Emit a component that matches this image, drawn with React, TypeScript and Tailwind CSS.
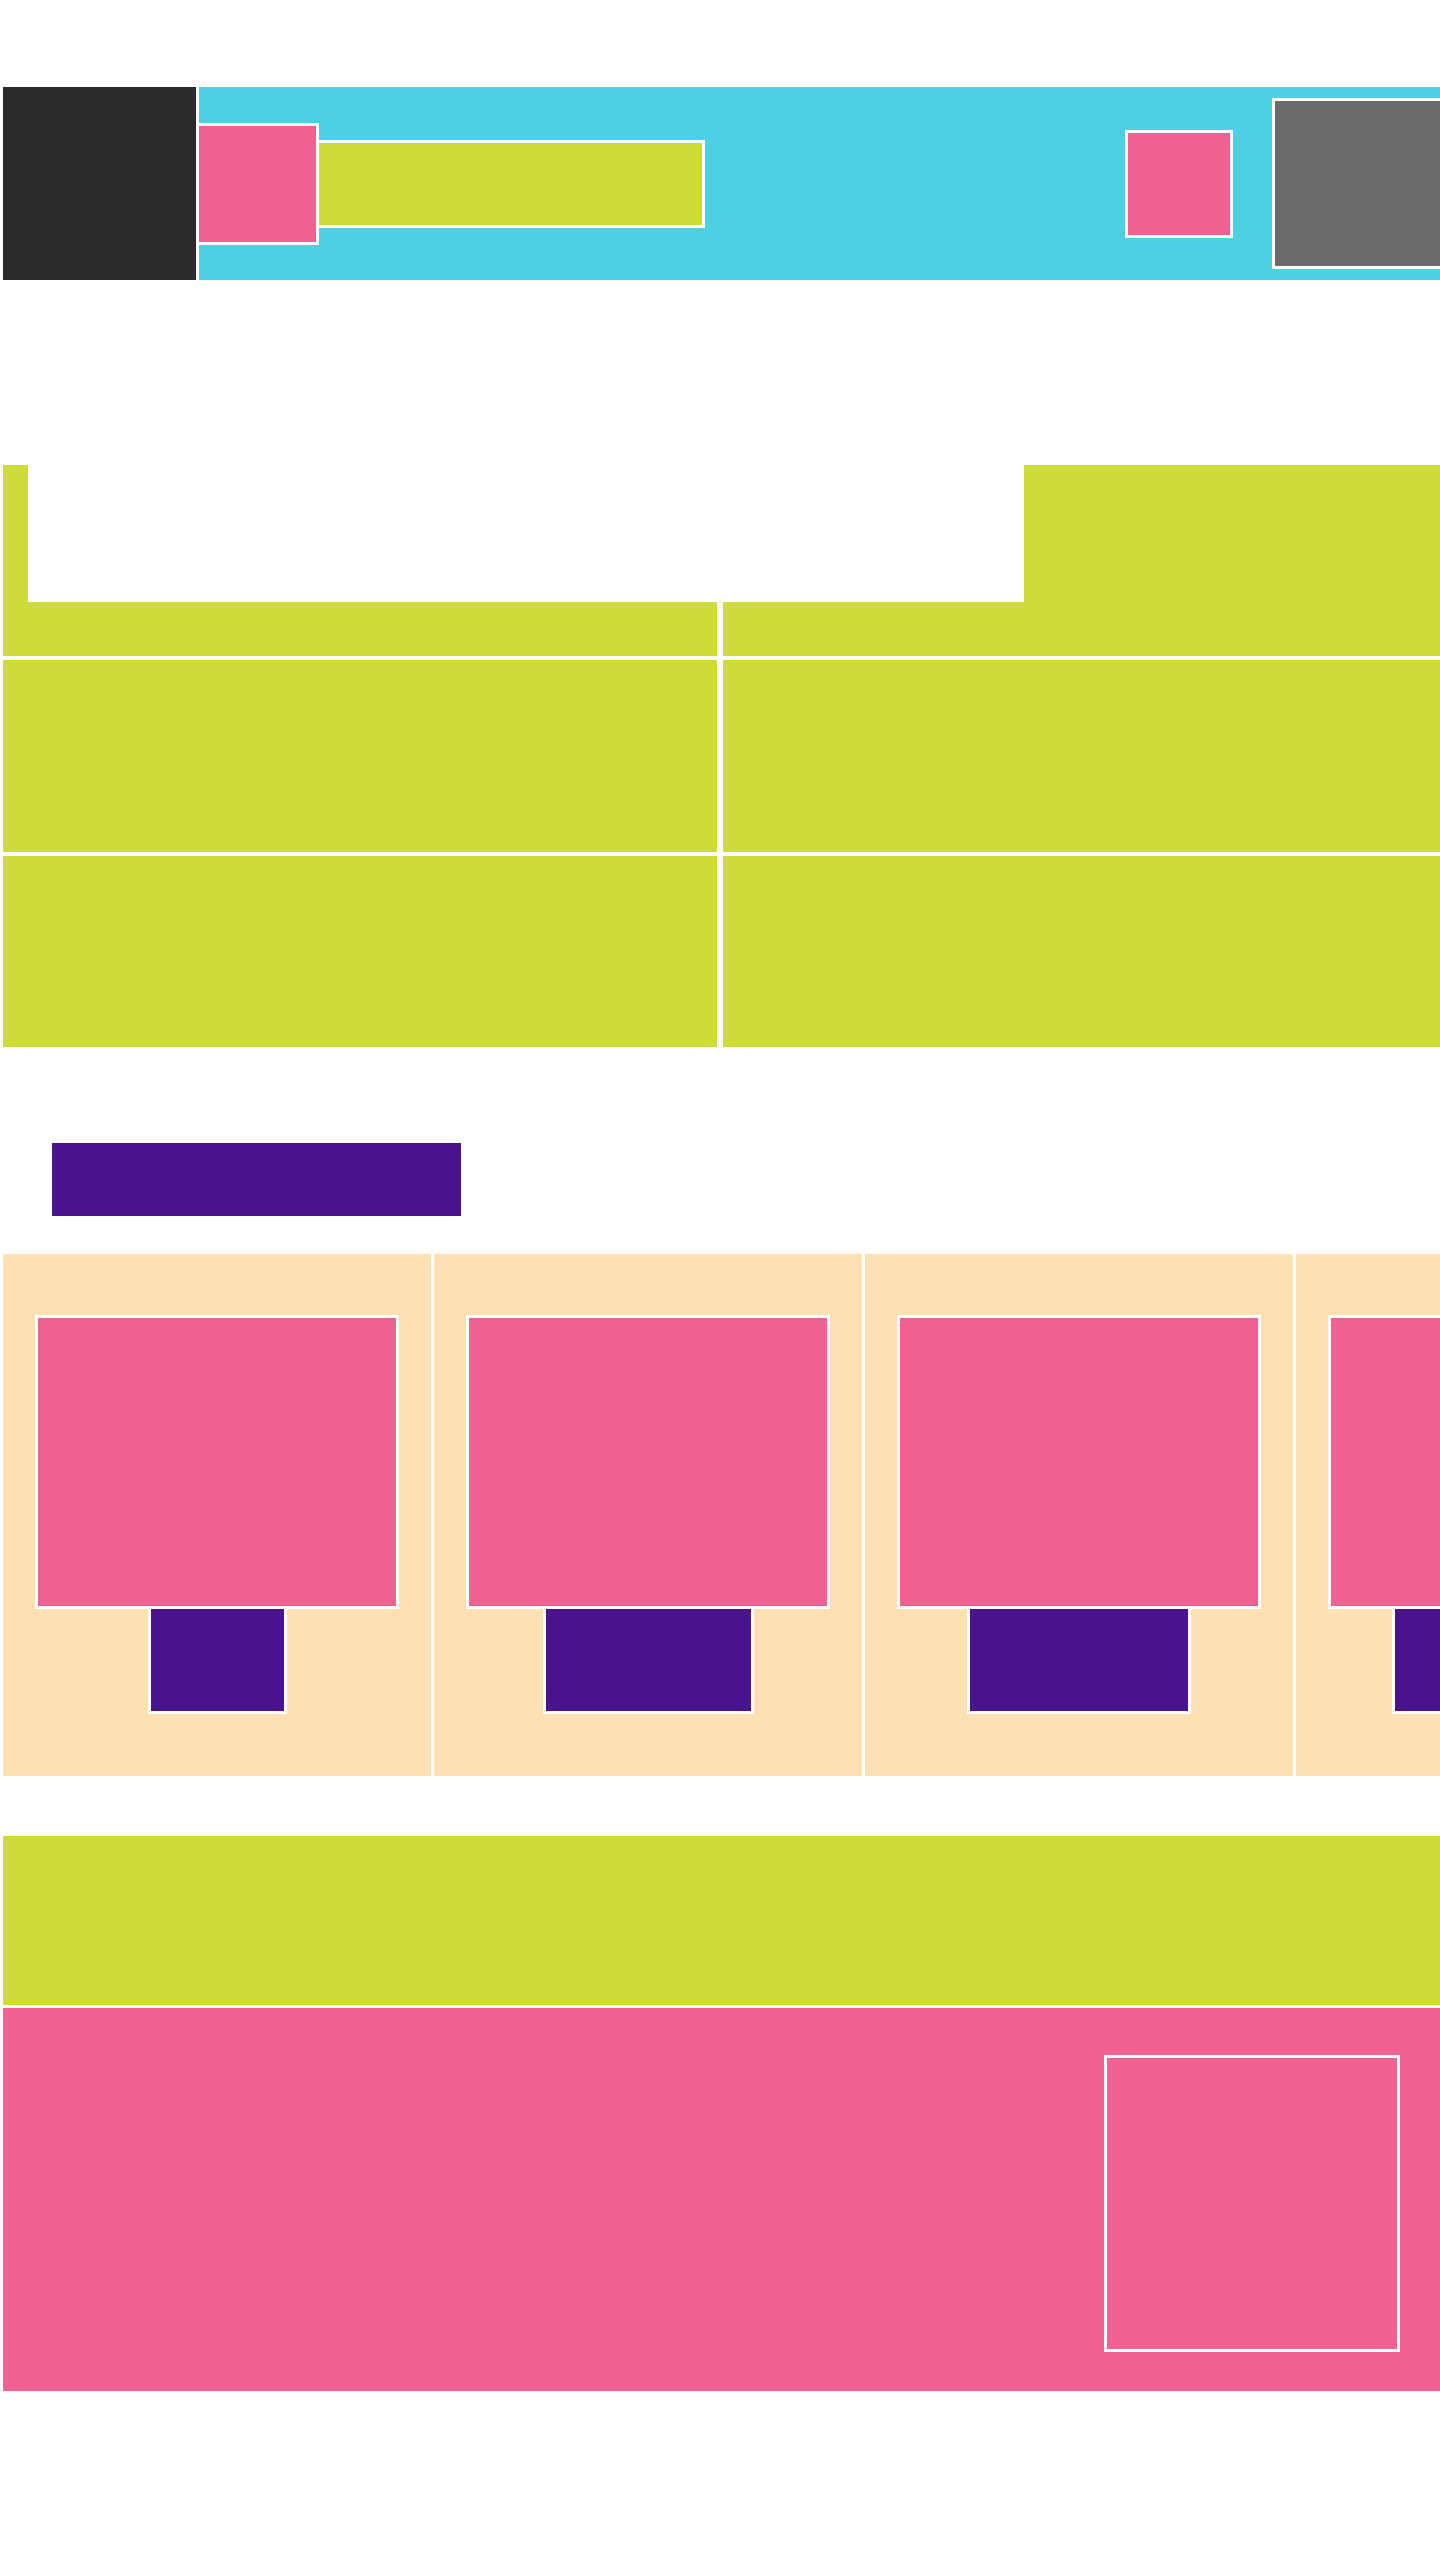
import React from "react";

const cardButtonWidths = [139, 211, 224, 236];

const Header = () => (
	<header className="flex h-[193px] items-stretch gap-[3px]">
		<div className="w-[193px] shrink-0 bg-[#2b2b2b]" />
		<div className="flex flex-1 items-center overflow-hidden bg-[#4dd0e1]">
			{/* logo + search */}
			<div className="h-[122px] w-[120px] shrink-0 border-[3px] border-l-0 border-white bg-[#f06292]" />
			<div className="h-[88px] w-[386px] shrink-0 border-[3px] border-l-0 border-white bg-[#cddc39]" />
			<div className="flex-1" />
			<div className="h-[108px] w-[108px] shrink-0 border-[3px] border-white bg-[#f06292]" />
			<div className="ml-[39px] mr-[-22px] h-[171px] w-[190px] shrink-0 border-[3px] border-white bg-[#6b6b6b]" />
		</div>
	</header>
);

const FeatureGrid = () => (
	<section className="relative mt-[185px]">
		<div className="grid grid-cols-[714px_1fr] grid-rows-[191px_192px_191px] gap-x-[6px] gap-y-[4px]">
			{Array.from({ length: 6 }).map((_, i) => (
				<div key={i} className="bg-[#cddc39]" />
			))}
		</div>
		{/* Hero box over the first row */}
		<div className="absolute left-[25px] top-0 h-[137px] w-[996px] bg-white" />
	</section>
);

const Cards = () => (
	<section>
		<div className="mt-[96px] pl-[49px]">
			<div className="h-[73px] w-[409px] bg-[#4a148c]" />
		</div>
		<div className="mt-[38px] flex gap-[3px] overflow-hidden">
			{cardButtonWidths.map((w, i) => (
				<div key={i} className="flex w-[428px] shrink-0 flex-col items-center bg-[#ffe0b2] px-[32px] pb-[62px] pt-[61px]">
					<div className="h-[294px] w-full border-[3px] border-white bg-[#f06292]" />
					<div className="h-[105px] border-[3px] border-t-0 border-white bg-[#4a148c]" style={{ width: `${w}px` }} />
				</div>
			))}
		</div>
	</section>
);

const Footer = () => (
	<section className="mt-[60px] flex flex-col gap-[3px]">
		<div className="h-[169px] bg-[#cddc39]" />
		<div className="flex h-[383px] justify-end bg-[#f06292] pr-[40px] pt-[47px]">
			<div className="h-[297px] w-[296px] border-[3px] border-white bg-[#f06292]" />
		</div>
	</section>
);

export default function App() {
	return (
		<div className="min-h-[2560px] w-[1440px] overflow-hidden bg-white pl-[3px] pt-[87px]">
			<Header />
			<FeatureGrid />
			<Cards />
			<Footer />
		</div>
	);
}
